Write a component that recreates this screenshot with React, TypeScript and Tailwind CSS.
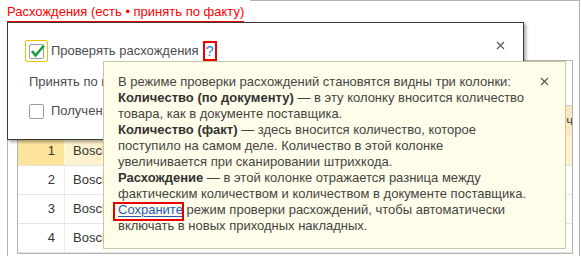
import React from "react";

function CloseX({ className }: { className?: string }) {
  return (
    <svg className={className} width="9" height="9" viewBox="0 0 9 9">
      <path d="M1 1 L8 8 M8 1 L1 8" stroke="#555" strokeWidth="1.1" fill="none" />
    </svg>
  );
}

const rows = [
  { n: 1, name: "Bosch GSB 13 RE", sel: true },
  { n: 2, name: "Bosch PSB 500 RE", sel: false },
  { n: 3, name: "Bosch GSR 120-LI", sel: false },
  { n: 4, name: "Bosch UniversalDrill", sel: false },
];

export default function App() {
  return (
    <div className="relative w-[581px] h-[256px] overflow-hidden bg-white font-['Liberation_Sans',Arial,sans-serif] text-[13px] leading-[16px] text-[#444]">
      <div className="flex flex-col h-full">
        <div className="flex h-[22px] shrink-0">
          <div className="w-[7px] shrink-0" />
          <span className="mt-[4px] h-[18px] border-b border-[#ff0000] text-[#ff0000] whitespace-nowrap">
            Расхождения (есть • принять по факту)
          </span>
          <div className="ml-[6px] mr-[1px] flex-1 border-t border-r border-[#b4b4b4]" />
        </div>
        <div className="flex-1 ml-[7px] mr-[1px] border-l border-r border-b border-[#b4b4b4] pl-[9px] pr-[6px] pt-[38px] pb-[3px] flex">
          <div className="flex-1 border border-[#b4b4b4] flex flex-col overflow-hidden">
            <div className="h-[44px] shrink-0" />
            <div className="flex h-[31px] shrink-0 border-t border-[#d0d0d0] border-b border-b-[#f4ecdc] bg-[#fde7c2] text-[#444]">
              <div className="w-[47px] shrink-0 border-r border-[#f6dcb0] flex items-center justify-end pr-[9px]">N</div>
              <div className="flex-1 border-r border-[#f6dcb0] flex items-center pl-[8px]">Номенклатура</div>
              <div className="w-[43px] shrink-0 flex items-center pl-[8px] whitespace-nowrap overflow-hidden">Количество</div>
            </div>
            {rows.map((r) => (
              <div
                key={r.n}
                className={`flex shrink-0 border-b border-[#e4e4e4] ${r.sel ? "h-[30px] bg-[#fef2cf]" : "h-[29px] bg-white"}`}
              >
                <div
                  className={`w-[47px] shrink-0 border-r flex items-center justify-end pr-[9px] text-[#333] ${
                    r.sel ? "bg-[#fde49d] border-[#fff7e0]" : "border-[#ececec]"
                  }`}
                >
                  {r.n}
                </div>
                <div className="flex-1 flex items-center pl-[8px] text-[#333] whitespace-nowrap overflow-hidden">{r.name}</div>
                <div className="w-[43px] shrink-0" />
              </div>
            ))}
          </div>
        </div>
      </div>

      {/* Dialog */}
      <div className="absolute left-[7px] top-[22px] w-[517px] h-[118px] bg-white border border-[#3a3a3a] shadow-[2px_2px_3px_rgba(0,0,0,0.35)] pl-[17px] pt-[17px] text-[#4d4d4d]">
        <div className="flex items-center">
          <div className="w-[23px] h-[22px] border border-[#f0c300] rounded-[2px] flex items-center justify-center">
            <div className="relative w-[15px] h-[15px] border border-[#9c9c9c] rounded-[2px] bg-white">
              <svg className="absolute left-[-1px] top-[-1px] overflow-visible" width="15" height="15" viewBox="0 0 15 15">
                <path d="M3 7 L6.5 11.5 L15 1.5" stroke="#1d9b3d" strokeWidth="2.6" fill="none" strokeLinejoin="miter" />
              </svg>
            </div>
          </div>
          <span className="ml-[3px] whitespace-nowrap">Проверять расхождения</span>
          <span className="ml-[4px] w-[14px] h-[20px] border-2 border-[#ee0000] flex items-center justify-center text-[#2b7fd0] text-[14px]">
            ?
          </span>
        </div>
        <div className="mt-[12px] ml-[4px] whitespace-nowrap">Принять по количеству:</div>
        <div className="mt-[13px] ml-[4px] flex items-center">
          <div className="w-[15px] h-[15px] border border-[#9c9c9c] rounded-[2px] bg-white" />
          <span className="ml-[7px] whitespace-nowrap">Полученное количество</span>
        </div>
        <CloseX className="absolute left-[488px] top-[18px]" />
      </div>

      {/* Tooltip */}
      <div className="absolute left-[103px] top-[61px] w-[463px] h-[188px] border border-[#c9c6a6] bg-[#fffde9] pl-[14px] pt-[12px] text-[#444] leading-[16px] whitespace-nowrap">
        В режиме проверки расхождений становятся видны три колонки:
        <br />
        <b className="text-[#333]">Количество (по документу)</b> — в эту колонку вносится количество
        <br />
        товара, как в документе поставщика.
        <br />
        <b className="text-[#333]">Количество (факт)</b> — здесь вносится количество, которое
        <br />
        поступило на самом деле. Количество в этой колонке
        <br />
        увеличивается при сканировании штрихкода.
        <br />
        <b className="text-[#333]">Расхождение</b> — в этой колонке отражается разница между
        <br />
        фактическим количеством и количеством в документе поставщика.
        <br />
        <span className="relative text-[#2558bd] underline underline-offset-[2px]">
          Сохраните
          <span className="absolute left-[-5px] top-[0px] w-[71px] h-[19px] border-2 border-[#e60000]" />
        </span>{" "}
        режим проверки расхождений, чтобы автоматически
        <br />
        включать в новых приходных накладных.
        <CloseX className="absolute left-[436px] top-[15px]" />
      </div>
    </div>
  );
}
